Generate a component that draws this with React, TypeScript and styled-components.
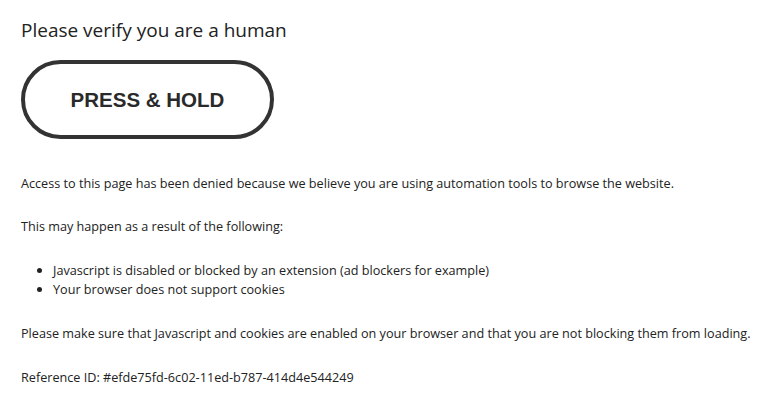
import styled, { createGlobalStyle } from "styled-components";

const GlobalStyle = createGlobalStyle`
  html, body {
    margin: 0;
    padding: 0;
    background: #fff;
  }
`;

const Page = styled.div`
  display: flex;
  flex-direction: column;
  align-items: flex-start;
  padding: 16px 0 0 21px;
  font-family: "Open Sans", "DejaVu Sans", sans-serif;
  color: #222;
`;

const Title = styled.h1`
  margin: 0;
  font-size: 19px;
  font-weight: 400;
  line-height: 28px;
  color: #222;
`;

const HoldButton = styled.button`
  margin-top: 16px;
  width: 253px;
  height: 79px;
  border: 4px solid #333;
  border-radius: 40px;
  background: #fff;
  font-family: "Liberation Sans", Arial, sans-serif;
  font-size: 20.5px;
  font-weight: 700;
  color: #2a2a2a;
  cursor: pointer;
`;

const Text = styled.p<{ $gap?: number }>`
  margin: ${({ $gap }) => $gap ?? 25}px 0 0;
  font-size: 12.65px;
  line-height: 18px;
  white-space: nowrap;
  color: #222;
`;

const List = styled.ul`
  margin: 26px 0 0;
  padding-left: 32px;
  font-size: 12.65px;
  line-height: 19px;
  color: #222;
`;

const App = () => (
  <>
    <GlobalStyle />
    <Page>
      <Title>Please verify you are a human</Title>
      <HoldButton>PRESS &amp; HOLD</HoldButton>
      <Text $gap={35}>
        Access to this page has been denied because we believe you are using
        automation tools to browse the website.
      </Text>
      <Text>This may happen as a result of the following:</Text>
      <List>
        <li>Javascript is disabled or blocked by an extension (ad blockers for example)</li>
        <li>Your browser does not support cookies</li>
      </List>
      <Text $gap={25}>
        Please make sure that Javascript and cookies are enabled on your browser
        and that you are not blocking them from loading.
      </Text>
      <Text $gap={26}>Reference ID: #efde75fd-6c02-11ed-b787-414d4e544249</Text>
    </Page>
  </>
);

export default App;
